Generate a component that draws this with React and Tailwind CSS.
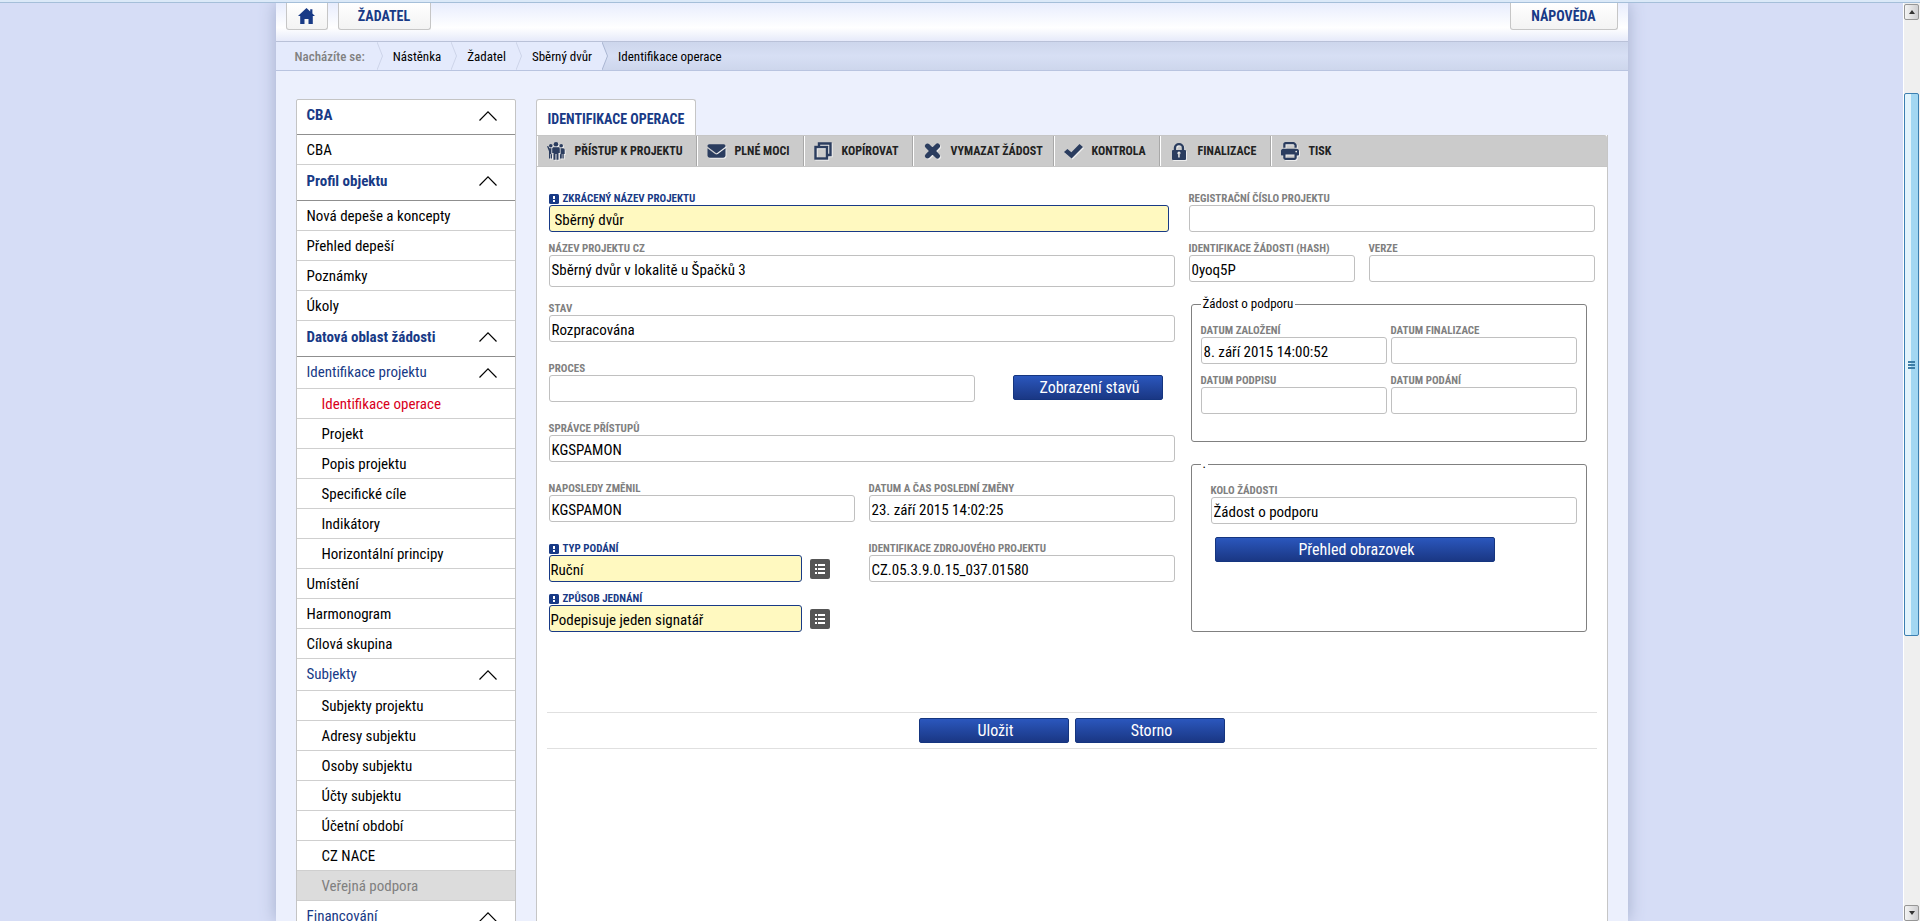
import React from 'react';
import { FaEnvelope, FaXmark, FaPrint } from 'react-icons/fa6';

const cn = (...classes) => classes.filter(Boolean).join(' ');

// ═══════════════════════════════════════════════════════════════
// DATA
// ═══════════════════════════════════════════════════════════════
const MENU = [
  { type: 'section', label: 'CBA' },
  { type: 'item', label: 'CBA' },
  { type: 'section', label: 'Profil objektu' },
  { type: 'item', label: 'Nová depeše a koncepty' },
  { type: 'item', label: 'Přehled depeší' },
  { type: 'item', label: 'Poznámky' },
  { type: 'item', label: 'Úkoly' },
  { type: 'section', label: 'Datová oblast žádosti' },
  { type: 'group', label: 'Identifikace projektu' },
  { type: 'sub', label: 'Identifikace operace', active: true },
  { type: 'sub', label: 'Projekt' },
  { type: 'sub', label: 'Popis projektu' },
  { type: 'sub', label: 'Specifické cíle' },
  { type: 'sub', label: 'Indikátory' },
  { type: 'sub', label: 'Horizontální principy' },
  { type: 'item', label: 'Umístění' },
  { type: 'item', label: 'Harmonogram' },
  { type: 'item', label: 'Cílová skupina' },
  { type: 'group', label: 'Subjekty' },
  { type: 'sub', label: 'Subjekty projektu' },
  { type: 'sub', label: 'Adresy subjektu' },
  { type: 'sub', label: 'Osoby subjektu' },
  { type: 'sub', label: 'Účty subjektu' },
  { type: 'sub', label: 'Účetní období' },
  { type: 'sub', label: 'CZ NACE' },
  { type: 'sub', label: 'Veřejná podpora', disabled: true },
  { type: 'group', label: 'Financování' }
];

const CRUMBS = ['Nástěnka', 'Žadatel', 'Sběrný dvůr'];

// ═══════════════════════════════════════════════════════════════
// ICONS
// ═══════════════════════════════════════════════════════════════
const HomeIcon = () => (
  <svg viewBox="0 0 17 16" className="w-[17px] h-4" fill="#183a86">
    <path d="M8.5 0 0 8h2.2v8h4.3v-5h4v5h4.3V8H17l-2.6-2.5V1.2h-2.2v2.2z" />
  </svg>
);

const ChevronUpIcon = () => (
  <svg viewBox="0 0 18 10" className="w-[18px] h-[10px]" fill="none" stroke="#000" strokeWidth="1.200">
    <path d="M.5 9.5 9 .9l8.500 8.600" />
  </svg>
);

const PeopleIcon = () => (
  <svg viewBox="0 0 18 18" className="w-[18px] h-[18px]" fill="currentColor">
    <circle cx="9" cy="2.300" r="2.300" />
    <circle cx="3.800" cy="3.800" r="1.800" />
    <circle cx="14.200" cy="3.800" r="1.800" />
    <path d="M6.600 5.200h4.800c1 0 1.400.6 1.400 1.500V11h-1.300v6.800H9.500V12h-1v5.800h-2V11H5.200V6.700c0-.9.500-1.500 1.400-1.500z" />
    <path d="M0 4.300 1.200 4l1.300 2.200h1.900V12l.6.500v4H3.900V12h-.6v4.500H2V9.200z" />
    <path d="M13.600 6.200h2.200c1.200 0 1.900.8 1.900 1.800v4h-1v4.500h-1.300V12h-.6v4.500H13V12.500l.6-.5z" />
  </svg>
);

const CopyIcon = () => (
  <svg viewBox="0 0 18 18" className="w-[18px] h-[18px]" fill="none" stroke="currentColor" strokeWidth="2.400">
    <path d="M5 4V1.500h11.500V13H14" />
    <rect x="1.500" y="5" width="11.500" height="11.500" />
  </svg>
);

const CheckIcon = () => (
  <svg viewBox="0 0 19 15" className="w-[19px] h-[15px]" fill="currentColor">
    <path d="M0 8 3.400 5l4 3.200L15.500 0 19 3 7.600 14.500z" />
  </svg>
);

const LockIcon = () => (
  <svg viewBox="0 0 14 17" className="w-[14px] h-[17px]" fill="currentColor">
    <path fillRule="evenodd" d="M1.800 7V4.800a5.200 4.800 0 0 1 10.400 0V7H13a1 1 0 0 1 1 1v8a1 1 0 0 1-1 1H1a1 1 0 0 1-1-1V8a1 1 0 0 1 1-1zM4.200 7h5.600V5a2.800 2.700 0 0 0-5.600 0zM5.400 10.200c0 .6.300 1 .8 1.300V14.500h1.600v-3c.5-.3.800-.7.800-1.300a1.600 1.600 0 0 0-3.200 0z" />
  </svg>
);

const RequiredIcon = () => (
  <svg viewBox="0 0 10 10" className="w-[10px] h-[10px] shrink-0">
    <rect width="10" height="10" rx="1.500" fill="#183a86" />
    <path d="M4 2h2v3H4zM4 6h2v2H4z" fill="#fff" />
  </svg>
);

const ListIcon = () => (
  <svg viewBox="0 0 20 20" className="w-5 h-5">
    <rect width="20" height="20" rx="2" fill="#555" />
    <path d="M5 5h2v2H5zM8 5h7v2H8zM5 9h2v2H5zM8 9h7v2H8zM5 13h2v2H5zM8 13h7v2H8z" fill="#fff" />
  </svg>
);

const TOOLS = [
  { label: 'PŘÍSTUP K PROJEKTU', width: 'w-[160px]', icon: <PeopleIcon /> },
  { label: 'PLNÉ MOCI', width: 'w-[107px]', icon: <FaEnvelope className="w-[19px] h-[18px]" /> },
  { label: 'KOPÍROVAT', width: 'w-[109px]', icon: <CopyIcon /> },
  { label: 'VYMAZAT ŽÁDOST', width: 'w-[141px]', icon: <FaXmark className="w-[20px] h-[20px] stroke-[70]" stroke="currentColor" /> },
  { label: 'KONTROLA', width: 'w-[106px]', icon: <CheckIcon /> },
  { label: 'FINALIZACE', width: 'w-[111px]', icon: <LockIcon /> },
  { label: 'TISK', width: 'w-[75px]', icon: <FaPrint className="w-[18px] h-[18px]" /> }
];

// ═══════════════════════════════════════════════════════════════
// FORM PARTS
// ═══════════════════════════════════════════════════════════════
const FieldLabel = ({ id, label, required }) => (
  <label
    htmlFor={id}
    className={cn(
      'flex h-[14px] items-center gap-1 pt-px text-[11px] leading-[13px] font-bold whitespace-nowrap',
      required ? 'text-[#183a86]' : 'text-[#808080]'
    )}
  >
    {required && <RequiredIcon />}
    {label}
  </label>
);

const inputClass = (required) =>
  cn(
    'block h-[27px] w-full min-w-0 rounded-[3px] border pt-[2px] text-[15px] leading-[22px] text-black outline-none',
    required ? 'border-[#183a86] bg-[#fff9c0]' : 'border-[#c0c0c0] bg-white'
  );

const Field = ({ id, label, value = '', required, className, padding = 'px-[2px]' }) => (
  <div className={className}>
    <FieldLabel id={id} label={label} required={required} />
    <input id={id} type="text" defaultValue={value} className={cn(inputClass(required), padding)} />
  </div>
);

const PickerField = ({ id, label, value }) => (
  <div className="pr-[25px]">
    <FieldLabel id={id} label={label} required />
    <div className="flex items-center gap-2">
      <input id={id} type="text" defaultValue={value} className={cn(inputClass(true), 'px-px')} />
      <button type="button" aria-label={label} className="shrink-0">
        <ListIcon />
      </button>
    </div>
  </div>
);

const BlueButton = ({ children, className }) => (
  <button
    type="button"
    className={cn(
      'h-[25px] rounded-[2px] border border-[#15357f] bg-linear-to-b from-[#2b57bd] to-[#1a3784] pl-1 text-base leading-[22px] text-white',
      className
    )}
  >
    {children}
  </button>
);

// ═══════════════════════════════════════════════════════════════
// HEADER
// ═══════════════════════════════════════════════════════════════
const TopButton = ({ children, className }) => (
  <button
    type="button"
    className={cn(
      'flex h-[27px] justify-center rounded-b-[3px] border border-t-0 border-[#c6c6c6] bg-linear-to-b from-white to-[#f3f3f3] text-sm leading-[26px] font-bold text-[#183a86]',
      className
    )}
  >
    {children}
  </button>
);

const Header = () => (
  <header className="flex h-[39px] shrink-0 gap-[10px] border-b border-[#b9c1d8] bg-linear-to-b from-[#e8edfd] via-white via-65% to-[#e6eafa] px-[10px]">
    <TopButton className="w-[42px] pt-[5px]">
      <HomeIcon />
    </TopButton>
    <TopButton className="w-[93px]">ŽADATEL</TopButton>
    <TopButton className="ml-auto w-[108px]">NÁPOVĚDA</TopButton>
  </header>
);

const CrumbArrow = ({ last }) => (
  <svg viewBox="0 0 6 28" className="h-7 w-[6px]" fill="none">
    {last ? <path d="M0 0 5.500 14 0 28z" fill="#e4eafc" /> : <path d="M0 0h6v28H0z" fill="#e4eafc" />}
    <path d="M0 0 5.500 14 0 28" stroke={last ? '#aab6d2' : '#cdd4e9'} />
  </svg>
);

const Breadcrumb = () => (
  <nav className="flex h-[29px] shrink-0 border-b border-[#b9c4e0] bg-linear-to-b from-[#cdd6ec] via-[#d7dff4] to-[#cdd6ec] text-[13px] leading-[27px] whitespace-nowrap">
    <span className="bg-[#e4eafc] pt-px pr-3 pl-[19px] font-medium text-[#808080]">Nacházíte se:</span>
    {CRUMBS.map((crumb, i) => (
      <React.Fragment key={crumb}>
        <CrumbArrow />
        <a href="#" className="bg-[#e4eafc] px-[10px] pt-px text-black">
          {crumb}
        </a>
        {i === CRUMBS.length - 1 && <CrumbArrow last />}
      </React.Fragment>
    ))}
    <span className="px-[10px] pt-px text-black">Identifikace operace</span>
  </nav>
);

// ═══════════════════════════════════════════════════════════════
// SIDEBAR
// ═══════════════════════════════════════════════════════════════
const MenuRow = ({ type, label, active, disabled }) => {
  if (type === 'section' || type === 'group') {
    return (
      <button
        type="button"
        className={cn(
          'flex w-full items-center justify-between border-b pr-[18px] pl-[10px] text-left text-[#183a86]',
          type === 'section' ? 'h-9 border-[#8f8f8f] pb-[3px] font-bold first:h-[35px]' : 'h-8 border-[#cfcfcf]'
        )}
      >
        {label}
        <ChevronUpIcon />
      </button>
    );
  }
  return (
    <a
      href="#"
      className={cn(
        'block h-[30px] border-b border-[#cfcfcf] pt-[2px] leading-[27px]',
        type === 'sub' ? 'pl-[25px]' : 'pl-[10px]',
        active && 'text-[#d9001b]',
        disabled && 'bg-[#dcdcdc] text-[#808080]',
        !active && !disabled && 'text-black'
      )}
    >
      {label}
    </a>
  );
};

const Sidebar = () => (
  <aside className="w-[220px] shrink-0 self-start rounded-t-[2px] border border-[#c4c4c4] bg-white text-[15px] whitespace-nowrap">
    {MENU.map((row, i) => (
      <MenuRow key={i} {...row} />
    ))}
  </aside>
);

// ═══════════════════════════════════════════════════════════════
// MAIN PANEL
// ═══════════════════════════════════════════════════════════════
const Toolbar = () => (
  <div className="flex h-8 rounded-tr-[3px] border-y border-[#c6c6c6] bg-[#cbcbcb]">
    {TOOLS.map(({ label, width, icon }, i) => (
      <button
        key={label}
        type="button"
        className={cn(
          'flex items-center border-l border-l-white pl-[9px] text-xs font-bold whitespace-nowrap text-[#222]',
          width,
          i < TOOLS.length - 1 && 'border-r border-r-[#a8a8a8]'
        )}
      >
        <span className="mr-[9px] flex w-[19px] shrink-0 justify-center text-[#2b3d5f] drop-shadow-[1px_1px_0_#eeeeee]">
          {icon}
        </span>
        {label}
      </button>
    ))}
  </div>
);

const ProjectForm = () => (
  <form className="grid grid-cols-[626fr_406fr] gap-x-[14px] px-3 pt-6">
    <div>
      <Field id="zkraceny" label="ZKRÁCENÝ NÁZEV PROJEKTU" value="Sběrný dvůr" required padding="px-[5px]" className="h-[50px] pr-[6px]" />
      <div className="h-[60px]">
        <FieldLabel id="nazev" label="NÁZEV PROJEKTU CZ" />
        <textarea
          id="nazev"
          defaultValue="Sběrný dvůr v lokalitě u Špačků 3"
          className="block h-8 w-full resize-none overflow-hidden rounded-[3px] border border-[#c0c0c0] px-[2px] pt-[3px] text-[15px] leading-[22px] text-black outline-none"
        />
      </div>
      <Field id="stav" label="STAV" value="Rozpracována" className="h-[60px]" />
      <div className="flex h-[60px] pr-3">
        <Field id="proces" label="PROCES" className="mr-[38px] flex-1" />
        <BlueButton className="mt-[14px] w-[150px]">Zobrazení stavů</BlueButton>
      </div>
      <Field id="spravce" label="SPRÁVCE PŘÍSTUPŮ" value="KGSPAMON" className="h-[60px]" />
      <div className="grid h-[60px] grid-cols-2 gap-x-[14px]">
        <Field id="zmenil" label="NAPOSLEDY ZMĚNIL" value="KGSPAMON" />
        <Field id="zmena" label="DATUM A ČAS POSLEDNÍ ZMĚNY" value="23. září 2015 14:02:25" />
      </div>
      <div className="grid h-[50px] grid-cols-2 gap-x-[14px]">
        <PickerField id="typ" label="TYP PODÁNÍ" value="Ruční" />
        <Field id="zdroj" label="IDENTIFIKACE ZDROJOVÉHO PROJEKTU" value="CZ.05.3.9.0.15_037.01580" />
      </div>
      <div className="grid h-[50px] grid-cols-2 gap-x-[14px]">
        <PickerField id="jednani" label="ZPŮSOB JEDNÁNÍ" value="Podepisuje jeden signatář" />
      </div>
    </div>

    <div>
      <Field id="registracni" label="REGISTRAČNÍ ČÍSLO PROJEKTU" className="h-[50px]" />
      <div className="grid h-[50px] grid-cols-[166fr_226fr] gap-x-[14px]">
        <Field id="hash" label="IDENTIFIKACE ŽÁDOSTI (HASH)" value="0yoq5P" />
        <Field id="verze" label="VERZE" />
      </div>

      <fieldset className="mt-[5px] mr-2 ml-[2px] rounded-[3px] border border-[#808080] px-[9px] pt-[11px] pb-[27px]">
        <legend className="px-[2px] text-[13px] leading-4 text-black">Žádost o podporu</legend>
        <div className="grid grid-cols-2 gap-x-1 gap-y-[9px]">
          <Field id="zalozeni" label="DATUM ZALOŽENÍ" value="8. září 2015 14:00:52" />
          <Field id="finalizace" label="DATUM FINALIZACE" />
          <Field id="podpis" label="DATUM PODPISU" />
          <Field id="podani" label="DATUM PODÁNÍ" />
        </div>
      </fieldset>

      <fieldset className="mt-[14px] mr-2 ml-[2px] rounded-[3px] border border-[#808080] px-[9px] pt-[11px] pb-[69px]">
        <legend className="px-[2px] text-[13px] leading-4 text-black">.</legend>
        <div className="pl-[10px]">
          <Field id="kolo" label="KOLO ŽÁDOSTI" value="Žádost o podporu" />
          <BlueButton className="mt-[13px] ml-1 w-[280px]">Přehled obrazovek</BlueButton>
        </div>
      </fieldset>
    </div>
  </form>
);

const MainPanel = () => (
  <main className="flex min-w-0 flex-1 flex-col">
    <h1 className="flex h-9 items-center self-start rounded-t-[3px] border border-b-0 border-[#c6c6c6] bg-white px-[11px] pt-[2px] text-sm font-bold whitespace-nowrap text-[#183a86]">
      IDENTIFIKACE OPERACE
    </h1>
    <div className="flex-1 border-x border-[#c6c6c6] bg-white">
      <Toolbar />
      <ProjectForm />
      <div className="mx-[10px] mt-[71px] flex h-[37px] items-center justify-center gap-[6px] border-y border-[#e0e0e0]">
        <BlueButton className="w-[150px]">Uložit</BlueButton>
        <BlueButton className="w-[150px]">Storno</BlueButton>
      </div>
    </div>
  </main>
);

// ═══════════════════════════════════════════════════════════════
// SCROLLBAR
// ═══════════════════════════════════════════════════════════════
const ScrollArrow = ({ down }) => (
  <span className="flex h-4 shrink-0 items-center justify-center rounded-[2px] border border-[#969696] bg-linear-to-r from-[#f4f4f4] to-[#cfcfd2]">
    <svg viewBox="0 0 6 4" className="h-1 w-[6px]" fill="#333">
      <path d={down ? 'M0 0h6L3 4z' : 'M0 4h6L3 0z'} />
    </svg>
  </span>
);

const Scrollbar = () => (
  <div className="flex w-[17px] shrink-0 flex-col border-l border-white bg-[#efefef] pt-px pr-px">
    <ScrollArrow />
    <span className="mt-[73px] flex h-[543px] flex-col items-center justify-center gap-px rounded-[2px] border border-[#3c7fb1] bg-linear-to-r from-[#e3f4fc] from-50% to-[#a3d7f2] to-50%">
      <i className="h-[2px] w-[7px] bg-[#3f7ea6]" />
      <i className="h-[2px] w-[7px] bg-[#3f7ea6]" />
      <i className="h-[2px] w-[7px] bg-[#3f7ea6]" />
    </span>
    <span className="flex-1" />
    <ScrollArrow down />
  </div>
);

const App = () => (
  <div className="flex h-screen flex-col overflow-hidden font-['Roboto_Condensed','Liberation_Sans_Narrow',Roboto,sans-serif]">
    <div className="h-[3px] shrink-0 border-b border-[#a5bfd9] bg-[#dbe9f8]" />
    <div className="flex min-h-0 flex-1">
      <div className="min-w-0 flex-1 overflow-hidden bg-[#d6ddf6]">
        <div className="mx-auto flex h-full w-full max-w-[1352px] flex-col bg-[#ecf0fd] shadow-[0_0_16px_#a3aecb]">
          <Header />
          <Breadcrumb />
          <div className="flex min-h-0 flex-1 gap-5 px-5 pt-7">
            <Sidebar />
            <MainPanel />
          </div>
        </div>
      </div>
      <Scrollbar />
    </div>
  </div>
);

export default App;
